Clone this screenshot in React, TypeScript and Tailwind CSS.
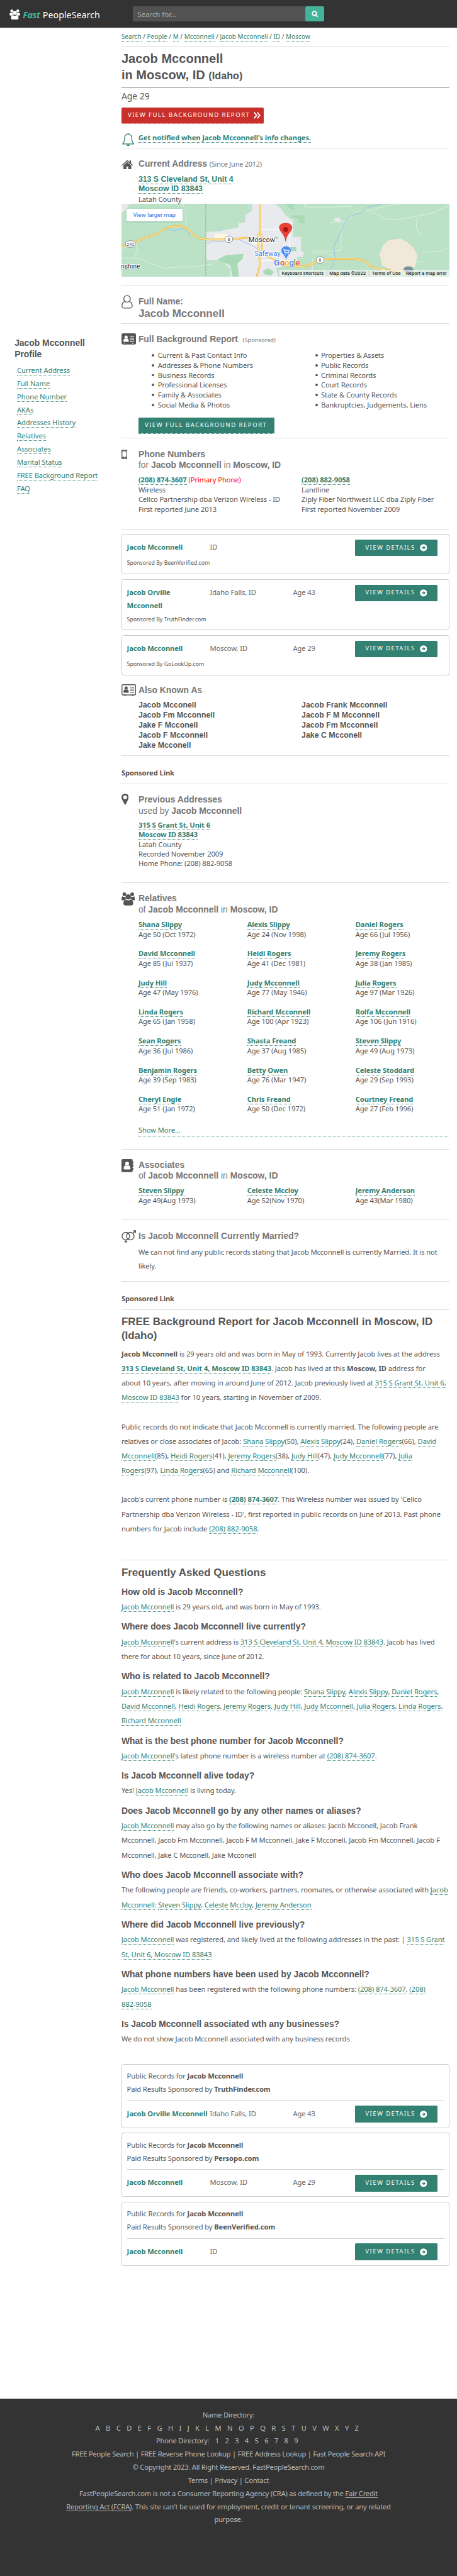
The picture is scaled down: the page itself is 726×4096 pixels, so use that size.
import type { ReactNode } from 'react';

const arial = "font-['Liberation_Sans',Arial,sans-serif]";

/* ---------- small pieces ---------- */

function A({ children, bold }: { children: ReactNode; bold?: boolean }) {
  return (
    <a className={'border-b border-dotted border-[#328172] text-[#328172]' + (bold ? ' font-bold' : '')}>
      {children}
    </a>
  );
}

function Section({ className, icon, children }: { className: string; icon?: ReactNode; children: ReactNode }) {
  return (
    <section className={'flex border-b border-[#ddd] ' + className}>
      <div className="w-[35px] shrink-0">{icon}</div>
      <div className="min-w-0 grow">{children}</div>
    </section>
  );
}

function Heading({ children }: { children: ReactNode }) {
  return (
    <h2 className={'pt-px text-[18px] leading-[23px] font-bold tracking-normal whitespace-nowrap text-[#777] ' + arial}>
      {children}
    </h2>
  );
}

/* ---------- icons ---------- */

function PeopleIcon({ className }: { className: string }) {
  return (
    <svg viewBox="0 0 28 27" className={className} fill="currentColor">
      <circle cx="6" cy="3.9" r="3.8" />
      <circle cx="22" cy="3.9" r="3.8" />
      <path d="M1.8 8.2c1.6 1.3 4.6 1.4 6.4.3.2 2.500.8 4.300 2 5.500-1.900.3-3.500 1-4.600 2.200H2.400C.8 16.200 0 15.400 0 13.800c0-2.200.5-4.300 1.800-5.600zM26.200 8.200c-1.600 1.300-4.600 1.400-6.400.3-.2 2.500-.8 4.300-2 5.500 1.900.3 3.500 1 4.600 2.200h3.200c1.600 0 2.400-.8 2.400-2.400 0-2.200-.5-4.300-1.800-5.600z" />
      <circle cx="14" cy="9.300" r="5.400" />
      <path d="M8.300 15c3.300 2 8.100 2 11.400 0 3 .8 4.300 3.800 4.300 7.500 0 2.700-1.300 4.300-3.800 4.300H7.800C5.300 26.800 4 25.200 4 22.500 4 18.800 5.300 15.800 8.300 15z" />
    </svg>
  );
}

function BellIcon() {
  return (
    <svg viewBox="0 0 25 28" className="h-[28px] w-[25px] text-[#328172]" fill="none" stroke="currentColor" strokeWidth="1.700">
      <path d="M12.500 2.500c-4.600.6-7.300 3.800-7.300 8.500 0 6-1.400 9.300-4.200 12.300h23c-2.800-3-4.200-6.300-4.200-12.300 0-4.700-2.700-7.900-7.300-8.500zM12.500.6v2" />
      <path d="M8.800 24.200h7.400c-.3 2-1.700 3.200-3.700 3.200s-3.400-1.200-3.700-3.200z" fill="currentColor" stroke="none" />
    </svg>
  );
}

function HouseIcon() {
  return (
    <svg viewBox="0 0 24 20" className="h-[20px] w-[24px] text-[#555]" fill="currentColor">
      <path d="M12 .5.500 10.600l1.400 1.500L12 3.300l10.100 8.800 1.400-1.500-4-3.500V1.500h-3v3z" />
      <path d="M12 4.900 4 11.800V19.500h6v-5.500h4v5.500h6v-7.700z" />
    </svg>
  );
}

function PersonIcon() {
  return (
    <svg viewBox="0 0 23 28" className="h-[28px] w-[23px] text-[#555]" fill="none" stroke="currentColor" strokeWidth="1.700">
      <circle cx="11.500" cy="8" r="6.800" />
      <path d="M6.500 13.400C2.800 15 1 18 1 22.500c0 3 1.300 4.500 4.200 4.500h12.600c2.900 0 4.200-1.500 4.200-4.500 0-4.500-1.800-7.500-5.500-9.100" />
    </svg>
  );
}

function CardIcon({ solid }: { solid?: boolean }) {
  const ink = solid ? '#fff' : '#555';
  return (
    <svg viewBox="0 0 30 24" className="h-[24px] w-[30px]">
      <path d="M5 21h4v2.500H5zM21 21h4v2.500h-4z" fill="#555" />
      <rect x="1" y="1" width="28" height="21" rx="2" fill={solid ? '#555' : '#fff'} stroke="#555" strokeWidth="1.800" />
      <path d="M6.500 22.500v-2M23 22.500v-2" stroke={ink} strokeWidth="1.500" />
      <circle cx="9.500" cy="7.800" r="3.300" fill={ink} />
      <path d="M7 10.800c1.600 1 3.400 1 5 0 2 .7 3 2.400 3 5.200 0 1-.6 1.600-1.600 1.600H5.600c-1 0-1.600-.6-1.600-1.600 0-2.800 1-4.500 3-5.200z" fill={ink} />
      <path d="M17.500 6.500H26M17.500 9.800H26M17.500 13.100H26M17.500 16.400H26" stroke={ink} strokeWidth="1.500" />
    </svg>
  );
}

function PhoneIcon() {
  return (
    <svg viewBox="0 0 12 19" className="h-[19px] w-[12px]">
      <rect width="12" height="19" rx="1.800" fill="#555" />
      <path d="M1.800 3.500h8.400v11.300H1.800z" fill="#fff" />
      <path d="M4.500 1.700h3" stroke="#fff" strokeWidth=".8" />
      <circle cx="6" cy="16.900" r="1" fill="#fff" />
    </svg>
  );
}

function PinIcon() {
  return (
    <svg viewBox="0 0 15 23" className="h-[23px] w-[15px]">
      <path fill="#555" fillRule="evenodd" d="M7.500 0C3.200 0 0 3.100 0 7.400c0 1.400.3 2.600.9 3.800l5.500 11c.5 1 1.700 1 2.200 0l5.500-11c.6-1.200.9-2.400.9-3.800C15 3.100 11.800 0 7.500 0zm0 3.600a3.900 3.900 0 1 1 0 7.800 3.900 3.900 0 0 1 0-7.800z" />
    </svg>
  );
}

function BookIcon() {
  return (
    <svg viewBox="0 0 25 27" className="h-[27px] w-[25px]">
      <rect width="23" height="27" rx="2.500" fill="#555" />
      <path d="M22 5h2.500v4H22zM22 11.500h2.500v4H22zM22 18h2.500v4H22z" fill="#555" />
      <circle cx="11.500" cy="9.500" r="4" fill="#fff" />
      <path d="M8 13c2.200 1.400 4.800 1.400 7 0 2.300.9 3.500 3 3.500 6.400 0 1.300-.8 2-2 2h-10c-1.200 0-2-.7-2-2C4.500 16 5.700 13.900 8 13z" fill="#fff" />
    </svg>
  );
}

function GendersIcon() {
  return (
    <svg viewBox="0 0 30 26" className="h-[26px] w-[30px]" fill="none" stroke="#555" strokeWidth="1.800">
      <circle cx="9" cy="12.300" r="7.800" />
      <circle cx="18.200" cy="12.300" r="7.800" />
      <path d="M9 20v5.800M6 23.300h6M23.600 6.600l5-5M24 1.300h4.900v4.900" />
    </svg>
  );
}

function ArrowIcon() {
  return (
    <svg viewBox="0 0 15 15" className="h-[15px] w-[15px]">
      <circle cx="7.500" cy="7.500" r="7.300" fill="#fff" />
      <path d="M4 7.500h6M7.400 4.600l3 2.900-3 2.900" fill="none" stroke="#328172" strokeWidth="1.900" />
    </svg>
  );
}

/* ---------- map ---------- */

function Shield({ x, y, w, label }: { x: number; y: number; w: number; label: string }) {
  return (
    <g>
      <rect x={x - w / 2} y={y - 6.500} width={w} height="13" rx="6" fill="#fff" stroke="#6b7075" />
      <text x={x} y={y + 3.300} textAnchor="middle" fontSize="9" fill="#333">{label}</text>
    </g>
  );
}

const highways = [
  'M417 625C450 608 480 585 500 570S530 555 545 538 570 506 585 502 620 496 630 500 650 530 665 552 690 577 708 580 770 580 790 579 830 572 854 569',
  'M892 360V535C885 545 886 555 886 640 886 660 892 690 892 730 892 760 882 780 882 810',
  'M892 545C900 555 899 565 899 645M888 650C910 680 940 705 970 735 1000 755 1040 748 1055 742S1085 715 1098 707 1210 698 1235 704 1260 745 1290 758 1350 776 1400 780',
];

function CityMap() {
  return (
    <div className="relative h-[150px] w-[676px] overflow-hidden bg-[#bbe2c6]">
      <svg viewBox="417 360 1126 450" preserveAspectRatio="none" className="absolute inset-0 h-full w-full" fill="none">
        <path fill="#e8eaed" d="M865 360v42l-23 28v45l-24 5v25l-28 12-45 14-37 4v173l50 0 30 50 18 52h148l-8-50 60-30 14 0v-40h18l5-30-11-10v-85h-27V465l-25-35-20-50-20-20zM417 360h28l-15 40-13 15z" />
        <path fill="#e8eaed" d="M1148 450l15-5 8 20-12 8-12-8zM790 710h150l14 100H790z" />
        <path fill="#a8dab5" d="M978 360h36l-10 18 10 22-20-12zM998 432h47v50l-20-5v-22l-27-15zM970 482h20v35h-20zM996 628h21v26h-14l-7-12zM746 706l30-28 60-8-4 30-18 30 6 80h-22l-8-70-35-26zM940 565h14v13h-14zM902 775l20-15 18 22-10 20-22-5z" />
        <path fill="#fef7e0" d="M738 545l44 3v25h-46zM866 590l18-4v30l-18-4zM965 710h20v22h-20z" />
        <path fill="#f0e8d8" d="M1302 668l12-50 20-34 40-8 24 22 20 32 14 48-8 72-20 40-50-10-44-40z" />
        <g stroke="#e3f2e5" strokeWidth="1.100">
          <path vectorEffect="non-scaling-stroke" d="M626 360l12 40v98M850 360l10 30 30 35M417 700l55-5 40 30 55 35 35-8 70-2 60-20M417 640l50-35 5 35-10 60M1045 360v20h103l30-5 30 2M1135 475l55-5 30-60 50-10 60-30 40-10M1190 470l-20 30v150l-100 5M1270 402l50 50 40 8 60-20 60-20 60-50M1430 452l-2 60 20 50M1448 660l60-8 35-20M1425 720h30M1064 665h60l30 30M1072 700v110M1098 665v-20" />
        </g>
        <path stroke="#d0dad6" strokeWidth="1" vectorEffect="non-scaling-stroke" d="M480 705c60 40 100-60 130-100s50-40 90-25M436 745l40-40" />
        <path stroke="#8fbde8" strokeWidth="1.200" vectorEffect="non-scaling-stroke" d="M570 510l25 18 35-15 20 30-5 15M708 600c20 5 10-10 25-10s30 10 50-10 40 5 60 20 40 30 50 60M1310 362l-50 20-20 30-40 25-20 50-15 60-20 80 5 70-10 50-8 20M750 515l8 12" />
        <path stroke="#fff" strokeWidth="1.800" vectorEffect="non-scaling-stroke" d="M892 517h90l12 40v90M892 713l80-5" />
        <path stroke="#777" strokeDasharray="3 2" strokeWidth=".8" vectorEffect="non-scaling-stroke" d="M706 360v450" />
        {highways.map((d) => (
          <path key={d} d={d} stroke="#f3bb43" strokeWidth="3.800" vectorEffect="non-scaling-stroke" />
        ))}
        {highways.map((d) => (
          <path key={d} d={d} stroke="#fdeab0" strokeWidth="1.500" vectorEffect="non-scaling-stroke" />
        ))}
      </svg>
      <svg viewBox="0 0 676 150" className="absolute inset-0 h-full w-full font-[Roboto,sans-serif]">
        <Shield x={18} y={83} w={20} label="270" />
        <Shield x={221} y={73} w={16} label="8" />
        <Shield x={409} y={116} w={16} label="8" />
        <g paintOrder="stroke" stroke="#fff" strokeWidth="2.500">
          <text x="262" y="79" fontSize="14" fill="#222" textLength="54">Moscow</text>
          <text x="-1" y="133" fontSize="13" fill="#222" textLength="39">nshine</text>
          <text x="274" y="107.500" fontSize="14" fill="#3b78e7" textLength="53">Safeway</text>
        </g>
        <path fill="#ea4335" stroke="#b9271c" strokeWidth=".8" d="M338 77c-1.200-9-4.500-13-8.500-18.500C326.500 54.500 325 51.500 325 49c0-5 5.500-9 13-9s13 4 13 9c0 2.500-1.500 5.500-4.500 9.500C342.500 64 339.200 68 338 77z" />
        <circle cx="338" cy="53" r="5" fill="#a81410" />
        <path fill="#4c8df5" d="M339 117c-.8-7-3-9.500-6-13-2.700-3.200-4-5-4-7.500a10 9 0 0 1 20 0c0 2.500-1.300 4.300-4 7.500-3 3.500-5.200 6-6 13z" />
        <path fill="none" stroke="#fff" strokeWidth="1.500" d="M333 94h2l2 7h7l1.500-5h-9.500M337.500 104.500h1M343 104.500h1" />
        <path fill="#78909c" d="M591 150c-8-10-10-12-10-15a10 6 0 0 1 20 0c0 3-2 5-10 15z" />
        <text y="127.500" fontSize="17" fontWeight="500" x="314 326.500 336 345.500 354.500 358.500" stroke="#fff" strokeWidth="1.500" paintOrder="stroke">
          <tspan fill="#4285f4">G</tspan><tspan fill="#ea4335">o</tspan><tspan fill="#fbbc05">o</tspan><tspan fill="#4285f4">g</tspan><tspan fill="#34a853">l</tspan><tspan fill="#ea4335">e</tspan>
        </text>
        <path d="M325 136h351v14H325z" fill="#f5f5f5" fillOpacity=".7" />
        <path d="M423.500 136v14M509.500 136v14" stroke="#bbb" strokeWidth=".8" />
        <g fontSize="10" fill="#000">
          <text x="330" y="147" textLength="86">Keyboard shortcuts</text>
          <text x="428" y="147" textLength="75">Map data ©2023</text>
          <text x="515.500" y="147" textLength="59">Terms of Use</text>
          <text x="586" y="147" textLength="84">Report a map error</text>
        </g>
      </svg>
      <div className="absolute top-[10px] left-[10px] flex h-[26px] w-[116px] items-center justify-center rounded-[2px] bg-white font-[Roboto,sans-serif] text-[12px] tracking-[0.1px] text-[#1a73e8] shadow">
        View larger map
      </div>
    </div>
  );
}

/* ---------- cards ---------- */

function CardRow({ name, place, age, tall }: { name: ReactNode; place: string; age?: string; tall?: boolean }) {
  return (
    <div className="flex leading-[27px] whitespace-nowrap">
      <div className="mt-[3px] w-[171px] font-bold text-[#328172]">{name}</div>
      <div className="mt-[3px] w-[171px] text-[#666]">{place}</div>
      <div className="mt-[3px] w-[128px] text-[#666]">{age}</div>
      <a className={'flex w-[170px] items-center rounded-[2px] bg-[#328172] pl-[21px] text-[12.500px] tracking-[1.800px] text-white ' + (tall ? 'h-[35px]' : 'h-[34px] self-start')}>
        <span className="w-[112px]">VIEW DETAILS</span>
        <ArrowIcon />
      </a>
    </div>
  );
}

function SponsorCard({ className, site, ...row }: { className: string; site: string; name: ReactNode; place: string; age?: string }) {
  return (
    <div className={'mt-[10px] rounded-[5px] border border-[#ccc] px-[10px] pt-[10px] ' + className}>
      <CardRow {...row} />
      <div className="mt-[5px] text-[11.400px] leading-[20px] tracking-normal">Sponsored By {site}</div>
    </div>
  );
}

function RecordCard({ site, ...row }: { site: string; name: ReactNode; place: string; age?: string }) {
  return (
    <div className="mb-[10px] h-[132px] rounded-[5px] border border-[#ccc] px-[10px] pt-[11px]">
      <div className="leading-[27px]">
        Public Records for <b>Jacob Mcconnell</b>
        <br />
        Paid Results Sponsored by <b>{site}</b>
      </div>
      <div className="mt-[9px] mb-[10px] h-px bg-[#ccc]" />
      <CardRow {...row} tall />
    </div>
  );
}

function SponsoredLink() {
  return <div className="h-[58px] border-b border-[#ddd] pt-[22px] leading-[27px] font-bold">Sponsored Link</div>;
}

function PeopleGrid({ people, className }: { people: string[][]; className: string }) {
  return (
    <div className={'grid grid-cols-[224px_223px_194px] leading-[20px] ' + className}>
      {people.map(([name, age]) => (
        <div key={name} className="h-[60px]">
          <A bold>{name}</A>
          <div>{age}</div>
        </div>
      ))}
    </div>
  );
}

function Question({ q, children }: { q: string; children: ReactNode }) {
  return (
    <div className="mb-[15.400px]">
      <h3 className={'pt-px text-[18px] leading-[23px] font-bold tracking-normal ' + arial}>{q}</h3>
      <p className="mt-[3px] leading-[30px] whitespace-nowrap">{children}</p>
    </div>
  );
}

/* ---------- data ---------- */

const menu = ['Current Address', 'Full Name', 'Phone Number', 'AKAs', 'Addresses History', 'Relatives', 'Associates', 'Marital Status', 'FREE Background Report', 'FAQ'];
const reportA = ['Current & Past Contact Info', 'Addresses & Phone Numbers', 'Business Records', 'Professional Licenses', 'Family & Associates', 'Social Media & Photos'];
const reportB = ['Properties & Assets', 'Public Records', 'Criminal Records', 'Court Records', 'State & County Records', 'Bankruptcies, Judgements, Liens'];
const relatives = [
  ['Shana Slippy', 'Age 50 (Oct 1972)'], ['Alexis Slippy', 'Age 24 (Nov 1998)'], ['Daniel Rogers', 'Age 66 (Jul 1956)'],
  ['David Mcconnell', 'Age 85 (Jul 1937)'], ['Heidi Rogers', 'Age 41 (Dec 1981)'], ['Jeremy Rogers', 'Age 38 (Jan 1985)'],
  ['Judy Hill', 'Age 47 (May 1976)'], ['Judy Mcconnell', 'Age 77 (May 1946)'], ['Julia Rogers', 'Age 97 (Mar 1926)'],
  ['Linda Rogers', 'Age 65 (Jan 1958)'], ['Richard Mcconnell', 'Age 100 (Apr 1923)'], ['Rolfa Mcconnell', 'Age 106 (Jun 1916)'],
  ['Sean Rogers', 'Age 36 (Jul 1986)'], ['Shasta Freand', 'Age 37 (Aug 1985)'], ['Steven Slippy', 'Age 49 (Aug 1973)'],
  ['Benjamin Rogers', 'Age 39 (Sep 1983)'], ['Betty Owen', 'Age 76 (Mar 1947)'], ['Celeste Stoddard', 'Age 29 (Sep 1993)'],
  ['Cheryl Engle', 'Age 51 (Jan 1972)'], ['Chris Freand', 'Age 50 (Dec 1972)'], ['Courtney Freand', 'Age 27 (Feb 1996)'],
];
const associates = [['Steven Slippy', 'Age 49(Aug 1973)'], ['Celeste Mccloy', 'Age 52(Nov 1970)'], ['Jeremy Anderson', 'Age 43(Mar 1980)']];
const crumbs = ['Search', 'People', 'M', 'Mcconnell', 'Jacob Mcconnell', 'ID', 'Moscow'];

function Bullets({ items }: { items: string[] }) {
  return (
    <ul>
      {items.map((t) => (
        <li key={t} className="flex items-center whitespace-nowrap">
          <span className="mr-[7px] h-[5px] w-[5px] rounded-full bg-[#555]" />
          {t}
        </li>
      ))}
    </ul>
  );
}

const Me = () => <A>Jacob Mcconnell</A>;

/* ---------- page ---------- */

export default function App() {
  return (
    <div className="flex h-[5309px] w-[941px] flex-col overflow-hidden bg-white font-['Noto_Sans',sans-serif] text-[14.500px] tracking-[-0.110px] text-[#555] [zoom:0.7715]">
      <header className="flex h-[57px] shrink-0 bg-[#333] text-white">
        <div className="flex w-[274px] pt-[19px] pl-[20px]">
          <PeopleIcon className="h-[21px] w-[22px]" />
          <div className="-mt-[5px] ml-[5px] flex text-[18.500px] leading-[34px] tracking-normal whitespace-nowrap">
            <b className="w-[41px] tracking-[-0.500px] text-[#43b39a] italic">Fast</b>
            <span>PeopleSearch</span>
          </div>
        </div>
        <div className="mt-[13px] h-[31px] w-[355px] bg-[#525252] pl-[9px] text-[15px] leading-[33px] text-[#aaa]">Search for...</div>
        <div className="mt-[13px] flex h-[31px] w-[38px] items-center justify-center rounded-[3px] bg-[#43b39a]">
          <svg viewBox="0 0 14 14" className="h-[14px] w-[14px]" fill="none" stroke="#fff" strokeWidth="2.300">
            <circle cx="5.800" cy="5.800" r="4.200" />
            <path d="m9 9 4 4" />
          </svg>
        </div>
      </header>

      <div className="flex h-[4886px] shrink-0">
        <aside className="w-[250px] shrink-0 pt-[639px] pl-[30px] whitespace-nowrap">
          <h3 className={'text-[18px] leading-[23px] font-bold tracking-normal ' + arial}>
            Jacob Mcconnell<br />Profile
          </h3>
          <ul className="mt-[8.600px] pl-[5px] leading-[27px]">
            {menu.map((m) => (
              <li key={m}><A>{m}</A></li>
            ))}
          </ul>
        </aside>

        <main className="w-[676px]">
          <nav className="h-[39px] border-b border-[#ddd] pt-[9px] text-[13px] leading-[20px] tracking-normal">
            {crumbs.map((c, i) => (
              <span key={c}>{i > 0 && ' / '}<A>{c}</A></span>
            ))}
          </nav>
          <h1 className={'h-[86px] border-b border-[#999] pt-[8px] text-[26px] leading-[34px] font-bold tracking-normal ' + arial}>
            Jacob Mcconnell<br />in Moscow, ID <span className="text-[21px]">(Idaho)</span>
          </h1>

          <section className="h-[124px] border-b border-[#ddd] pt-[4px]">
            <div className="text-[18px] leading-[26px] tracking-normal">Age 29</div>
            <a className="mt-[10px] flex h-[33px] w-[293px] items-center rounded-[2px] border-b border-dotted border-[#c9302c] bg-[#c9302c] bg-clip-padding pl-[13px] text-[12.500px] tracking-[1.900px] whitespace-nowrap text-white">
              <span className="w-[260px]">VIEW FULL BACKGROUND REPORT</span>
              <svg viewBox="0 0 15 14" className="h-[14px] w-[15px]" fill="none" stroke="#fff" strokeWidth="2.600">
                <path d="m1 .8 5 6.200-5 6.200M7.500.8l5 6.200-5 6.200" />
              </svg>
            </a>
            <div className="mt-[19px] flex pl-px">
              <BellIcon />
              <div className="ml-[9px] leading-[22px]"><A bold>Get notified when Jacob Mcconnell's info changes.</A></div>
            </div>
          </section>

          <section className="h-[283px] border-b border-[#ddd] pt-[20px]">
            <div className="flex h-[94px]">
              <div className="w-[35px] pt-[3px]"><HouseIcon /></div>
              <div>
                <Heading>
                  Current Address <span className="font-['Noto_Sans',sans-serif] text-[14px] leading-[20px] font-normal tracking-[-0.200px]">(Since June 2012)</span>
                </Heading>
                <div className={'mt-[10.300px] text-[16px] leading-[20px] tracking-normal ' + arial}>
                  <A bold>313 S Cleveland St, Unit 4</A><br />
                  <A bold>Moscow ID 83843</A>
                </div>
                <div className="leading-[20px]">Latah County</div>
              </div>
            </div>
            <CityMap />
          </section>

          <Section className="h-[78px] pt-[19px]" icon={<PersonIcon />}>
            <div className="pt-px"><Heading>Full Name:</Heading></div>
            <div className={'-mt-px text-[22px] leading-[28px] font-bold tracking-normal text-[#777] ' + arial}>Jacob Mcconnell</div>
          </Section>

          <Section className="h-[237px] pt-[20px]" icon={<CardIcon solid />}>
            <Heading>
              Full Background Report <span className="ml-[5px] font-['Noto_Sans',sans-serif] text-[12px] font-normal">(Sponsored)</span>
            </Heading>
            <div className="mt-[10px] grid grid-cols-[336px_auto] pl-[28px] leading-[20.400px]">
              <Bullets items={reportA} />
              <Bullets items={reportB} />
            </div>
            <a className="mt-[16px] flex h-[32px] w-[280px] items-center rounded-[2px] bg-[#328172] pl-[13px] text-[12.500px] tracking-[1.900px] whitespace-nowrap text-white">
              VIEW FULL BACKGROUND REPORT
            </a>
            <div className="w-[280px] border-b border-dotted border-[#328172]" />
          </Section>

          <Section className="h-[187px] pt-[20px]" icon={<div className="pt-[3px]"><PhoneIcon /></div>}>
            <Heading>
              Phone Numbers<br />
              <span className="font-normal">for</span> Jacob Mcconnell <span className="font-normal">in</span> Moscow, ID
            </Heading>
            <div className="mt-[8px] grid grid-cols-[336px_auto] leading-[20px] whitespace-nowrap">
              <div>
                <A bold>(208) 874-3607</A> <span className="text-[#f00]">(Primary Phone)</span><br />
                Wireless<br />Cellco Partnership dba Verizon Wireless - ID<br />First reported June 2013
              </div>
              <div>
                <A bold>(208) 882-9058</A><br />
                Landline<br />Ziply Fiber Northwest LLC dba Ziply Fiber<br />First reported November 2009
              </div>
            </div>
          </Section>

          <SponsorCard className="h-[83px]" site="BeenVerified.com" name="Jacob Mcconnell" place="ID" />
          <SponsorCard className="h-[105px]" site="TruthFinder.com" name={<>Jacob Orville<br />Mcconnell</>} place="Idaho Falls, ID" age="Age 43" />
          <SponsorCard className="h-[83px]" site="GoLookUp.com" name="Jacob Mcconnell" place="Moscow, ID" age="Age 29" />

          <Section className="h-[166px] pt-[19px]" icon={<CardIcon />}>
            <Heading>Also Known As</Heading>
            <div className={'mt-[9.300px] grid grid-cols-[336px_auto] text-[16px] leading-[20.700px] font-bold tracking-normal ' + arial}>
              <div>Jacob Mcconell<br />Jacob Fm Mcconnell<br />Jake F Mcconell<br />Jacob F Mcconnell<br />Jake Mcconell</div>
              <div>Jacob Frank Mcconnell<br />Jacob F M Mcconnell<br />Jacob Fm Mcconnell<br />Jake C Mcconell</div>
            </div>
          </Section>

          <SponsoredLink />

          <Section className="h-[204px] pt-[20px]" icon={<PinIcon />}>
            <Heading>Previous Addresses<br /><span className="font-normal">used by</span> Jacob Mcconnell</Heading>
            <div className="mt-[7px] leading-[20px]">
              <A bold>315 S Grant St, Unit 6</A><br />
              <A bold>Moscow ID 83843</A><br />
              Latah County<br />Recorded November 2009<br />Home Phone: (208) 882-9058
            </div>
          </Section>

          <Section className="h-[549px] pt-[20px]" icon={<PeopleIcon className="h-[27px] w-[28px] text-[#555]" />}>
            <Heading>
              Relatives<br />
              <span className="font-normal">of</span> Jacob Mcconnell <span className="font-normal">in</span> Moscow, ID
            </Heading>
            <PeopleGrid people={relatives} className="mt-[8.400px]" />
            <a className="block h-[27px] border-b border-dotted border-[#328172] leading-[28px] text-[#328172]">Show More...</a>
          </Section>

          <Section className="h-[146px] pt-[20px]" icon={<BookIcon />}>
            <Heading>
              Associates<br />
              <span className="font-normal">of</span> Jacob Mcconnell <span className="font-normal">in</span> Moscow, ID
            </Heading>
            <PeopleGrid people={associates} className="mt-[8px]" />
          </Section>

          <Section className="h-[127px] pt-[20px]" icon={<GendersIcon />}>
            <div className="pt-px"><Heading>Is Jacob Mcconnell Currently Married?</Heading></div>
            <p className="mt-[7px] leading-[28px] whitespace-nowrap">
              We can not find any public records stating that Jacob Mcconnell is currently Married. It is not<br />likely.
            </p>
          </Section>

          <SponsoredLink />

          <section className="h-[516px] border-b border-[#ddd] pt-[11px]">
            <h2 className={'text-[22px] leading-[28px] font-bold tracking-normal whitespace-nowrap ' + arial}>
              FREE Background Report for Jacob Mcconnell in Moscow, ID<br />(Idaho)
            </h2>
            <div className="mt-[8.300px] flex flex-col gap-[30px] leading-[30px] tracking-[-0.065px] whitespace-nowrap">
              <p>
                <b>Jacob Mcconnell</b> is 29 years old and was born in May of 1993. Currently Jacob lives at the address<br />
                <A bold>313 S Cleveland St, Unit 4, Moscow ID 83843</A>. Jacob has lived at this <b>Moscow, ID</b> address for<br />
                about 10 years, after moving in around June of 2012. Jacob previously lived at <A>315 S Grant St, Unit 6,<br />
                Moscow ID 83843</A> for 10 years, starting in November of 2009.
              </p>
              <p>
                Public records do not indicate that Jacob Mcconnell is currently married. The following people are<br />
                relatives or close associates of Jacob: <A>Shana Slippy</A>(50), <A>Alexis Slippy</A>(24), <A>Daniel Rogers</A>(66), <A>David<br />
                Mcconnell</A>(85), <A>Heidi Rogers</A>(41), <A>Jeremy Rogers</A>(38), <A>Judy Hill</A>(47), <A>Judy Mcconnell</A>(77), <A>Julia<br />
                Rogers</A>(97), <A>Linda Rogers</A>(65) and <A>Richard Mcconnell</A>(100).
              </p>
              <p>
                Jacob's current phone number is <A bold>(208) 874-3607</A>. This Wireless number was issued by 'Cellco<br />
                Partnership dba Verizon Wireless - ID', first reported in public records on June of 2013. Past phone<br />
                numbers for Jacob include <A>(208) 882-9058</A>.
              </p>
            </div>
          </section>

          <section className="h-[1038px] pt-[11.500px]">
            <h2 className={'mb-[13.500px] text-[22px] leading-[28px] font-bold tracking-normal ' + arial}>Frequently Asked Questions</h2>
            <Question q="How old is Jacob Mcconnell?"><Me /> is 29 years old, and was born in May of 1993.</Question>
            <Question q="Where does Jacob Mcconnell live currently?">
              <Me />'s current address is <A>313 S Cleveland St, Unit 4, Moscow ID 83843</A>. Jacob has lived<br />
              there for about 10 years, since June of 2012.
            </Question>
            <Question q="Who is related to Jacob Mcconnell?">
              <Me /> is likely related to the following people: <A>Shana Slippy</A>, <A>Alexis Slippy</A>, <A>Daniel Rogers</A>,<br />
              <A>David Mcconnell</A>, <A>Heidi Rogers</A>, <A>Jeremy Rogers</A>, <A>Judy Hill</A>, <A>Judy Mcconnell</A>, <A>Julia Rogers</A>, <A>Linda Rogers</A>,<br />
              <A>Richard Mcconnell</A>
            </Question>
            <Question q="What is the best phone number for Jacob Mcconnell?">
              <Me />'s latest phone number is a wireless number at <A>(208) 874-3607</A>.
            </Question>
            <Question q="Is Jacob Mcconnell alive today?">Yes! <Me /> is living today.</Question>
            <Question q="Does Jacob Mcconnell go by any other names or aliases?">
              <Me /> may also go by the following names or aliases: Jacob Mcconell, Jacob Frank<br />
              Mcconnell, Jacob Fm Mcconnell, Jacob F M Mcconnell, Jake F Mcconell, Jacob Fm Mcconnell, Jacob F<br />
              Mcconnell, Jake C Mcconell, Jake Mcconell
            </Question>
            <Question q="Who does Jacob Mcconnell associate with?">
              The following people are friends, co-workers, partners, roomates, or otherwise associated with <A>Jacob<br />
              Mcconnell</A>: <A>Steven Slippy</A>, <A>Celeste Mccloy</A>, <A>Jeremy Anderson</A>
            </Question>
            <Question q="Where did Jacob Mcconnell live previously?">
              <Me /> was registered, and likely lived at the following addresses in the past: | <A>315 S Grant<br />
              St, Unit 6, Moscow ID 83843</A>
            </Question>
            <Question q="What phone numbers have been used by Jacob Mcconnell?">
              <Me /> has been registered with the following phone numbers: <A>(208) 874-3607</A>, <A>(208)<br />882-9058</A>
            </Question>
            <Question q="Is Jacob Mcconnell associated wth any businesses?">
              We do not show Jacob Mcconnell associated with any business records
            </Question>
          </section>

          <RecordCard site="TruthFinder.com" name="Jacob Orville Mcconnell" place="Idaho Falls, ID" age="Age 43" />
          <RecordCard site="Persopo.com" name="Jacob Mcconnell" place="Moscow, ID" age="Age 29" />
          <RecordCard site="BeenVerified.com" name="Jacob Mcconnell" place="ID" />
        </main>
      </div>

      <footer className="grow bg-[#333] pt-[21px] text-center leading-[27px] tracking-[-0.270px] whitespace-nowrap text-[#bbb]">
        <div>Name Directory:</div>
        <div className="flex justify-center gap-[12.400px] pr-[6px]">
          {'ABCDEFGHIJKLMNOPQRSTUVWXYZ'.split('').map((c) => <span key={c}>{c}</span>)}
        </div>
        <div className="flex justify-center gap-[12.300px] pr-[6px]">
          <span>Phone Directory:</span>
          {'123456789'.split('').map((c) => <span key={c}>{c}</span>)}
        </div>
        <div>FREE People Search | FREE Reverse Phone Lookup | FREE Address Lookup | Fast People Search API</div>
        <div>© Copyright 2023. All Right Reserved. FastPeopleSearch.com</div>
        <div>Terms | Privacy | Contact</div>
        <div>
          FastPeopleSearch.com is not a Consumer Reporting Agency (CRA) as defined by the <u className="underline-offset-2">Fair Credit<br />
          Reporting Act (FCRA)</u>. This site can't be used for employment, credit or tenant screening, or any related<br />
          purpose.
        </div>
      </footer>
    </div>
  );
}
